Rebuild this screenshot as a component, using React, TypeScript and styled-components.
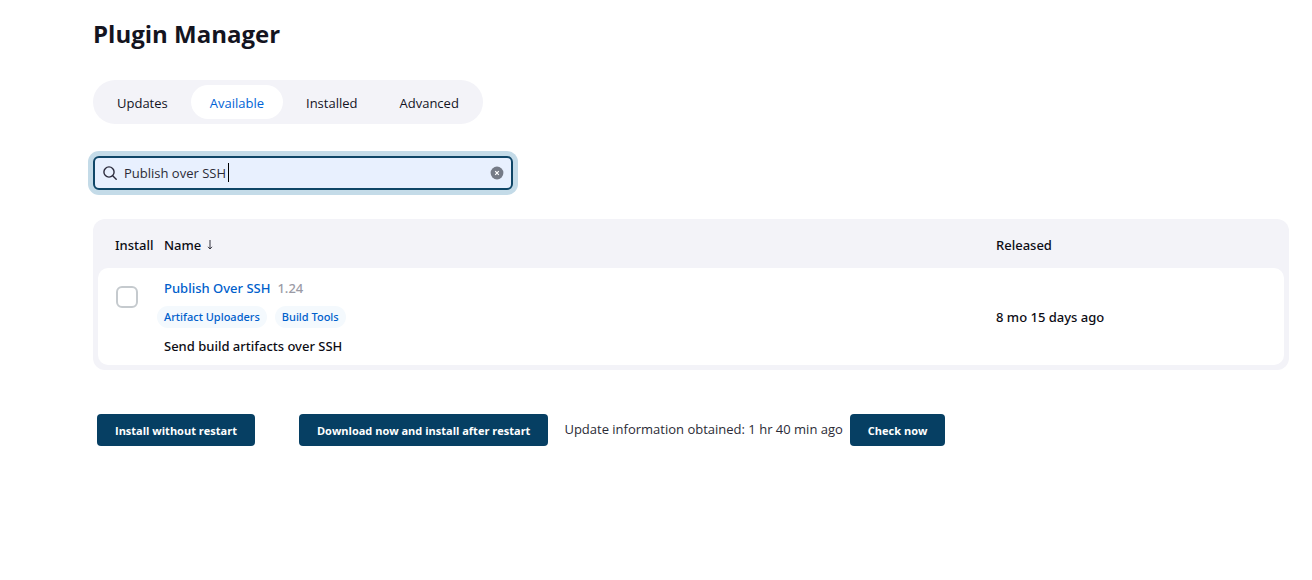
import React, { useState } from "react";
import styled, { createGlobalStyle } from "styled-components";

const GlobalStyle = createGlobalStyle`
  *, *::before, *::after { box-sizing: border-box; }
  body {
    margin: 0;
    background: #fff;
    color: #14141f;
    font-family: "Segoe UI", "Open Sans", "Noto Sans", sans-serif;
    font-size: 13px;
    line-height: 20px;
  }
  button, input { font: inherit; color: inherit; }
  a { text-decoration: none; }
`;

const Page = styled.main`
  padding: 16px 23px 16px 93px;
`;

const Title = styled.h1`
  margin: 0 0 28px;
  font-size: 24px;
  line-height: 36px;
  font-weight: 700;
`;

const TabBar = styled.nav`
  display: flex;
  width: fit-content;
  padding: 5px;
  border-radius: 22px;
  background: #f3f3f8;
`;

const Tab = styled.a<{ $active?: boolean }>`
  padding: 8px 19px 6px;
  border-radius: 17px;
  font-weight: 500;
  color: ${(p) => (p.$active ? "#0063d6" : "#14141f")};
  background: ${(p) => (p.$active ? "#fff" : "transparent")};
  & + & { margin-left: 4px; }
`;

const SearchBox = styled.form`
  position: relative;
  display: flex;
  align-items: center;
  gap: 7px;
  max-width: 420px;
  height: 34px;
  margin: 32px 0 29px;
  padding: 0 7px 0 8px;
  border: 2px solid #0f4667;
  border-radius: 6px;
  background: #e8f0fe;
  box-shadow: 0 0 0 5px #c4dbe8;
`;

const SearchInput = styled.input`
  flex: 1;
  min-width: 0;
  padding: 0;
  border: 0;
  outline: 0;
  background: transparent;
  color: #2b2b36;
  caret-color: transparent;
`;

const Caret = styled.span`
  position: absolute;
  left: 133px;
  top: 5px;
  width: 1px;
  height: 19px;
  background: #000;
`;

const ClearButton = styled.button`
  display: flex;
  padding: 0;
  border: 0;
  background: none;
`;

const PluginTable = styled.table`
  width: 100%;
  padding: 0 5px 5px;
  border-spacing: 0;
  border-radius: 12px;
  background: #f3f3f8;
  table-layout: fixed;
  font-family: "Segoe UI", "Noto Sans", "Open Sans", sans-serif;
  font-weight: 500;
  color: #0c0c14;
`;

const HeadCell = styled.th<{ $width?: string }>`
  width: ${(p) => p.$width ?? "auto"};
  height: 49px;
  padding: 3px 0 0;
  text-align: left;
  font-weight: 500;
  white-space: nowrap;
  &:first-child { padding-left: 17px; }
`;

const SortArrow = styled.span`
  display: inline-block;
  margin-left: 6px;
  svg { display: block; }
`;

const Cell = styled.td`
  height: 97px;
  padding: 0;
  background: #fff;
  &:first-child {
    padding: 18px 0 0 18px;
    vertical-align: top;
    border-radius: 10px 0 0 10px;
  }
  &:last-child { border-radius: 0 10px 10px 0; }
`;

const Checkbox = styled.input`
  appearance: none;
  display: block;
  width: 22px;
  height: 22px;
  margin: 0;
  border: 2px solid #c5cace;
  border-radius: 6px;
  background: #fff;
  &:checked { background: #0063d6; }
`;

const PluginLink = styled.a`
  color: #0060cc;
`;

const Version = styled.span`
  margin-left: 7px;
  color: #9b9ba6;
`;

const Tags = styled.div`
  display: flex;
  gap: 8px;
  margin: 8px 0 8px -7px;
`;

const Tag = styled.a`
  padding: 0 7px;
  border-radius: 11px;
  background: #f4f9fd;
  color: #0060cc;
  font-size: 11px;
  line-height: 22px;
`;

const Actions = styled.div`
  display: flex;
  flex-wrap: wrap;
  align-items: center;
  margin: 44px 0 0 4px;
`;

const ActionButton = styled.button`
  height: 32px;
  padding: 1px 18px 0;
  border: 0;
  border-radius: 4px;
  background: #063f63;
  color: #fff;
  font-size: 11px;
  font-weight: 700;
  & + & { margin-left: 44px; }
`;

const UpdateInfo = styled.span`
  margin: 0 7px 0 16px;
  padding-bottom: 2px;
  color: #2b2b36;
`;

export default function App() {
  const [query, setQuery] = useState("Publish over SSH");
  return (
    <>
      <GlobalStyle />
      <Page>
        <Title>Plugin Manager</Title>
        <TabBar>
          <Tab href="#updates">Updates</Tab>
          <Tab href="#available" $active aria-current="page">Available</Tab>
          <Tab href="#installed">Installed</Tab>
          <Tab href="#advanced">Advanced</Tab>
        </TabBar>
        <SearchBox role="search">
          <svg width="14" height="14" viewBox="0 0 14 14" fill="none" stroke="#2b2b3c" strokeWidth="1.4" strokeLinecap="round" aria-hidden="true">
            <circle cx="6" cy="6" r="5.1" />
            <path d="M9.7 9.7 13.2 13.2" />
          </svg>
          <SearchInput aria-label="Search plugins" value={query} onChange={(e) => setQuery(e.target.value)} />
          {query === "Publish over SSH" && <Caret />}
          <ClearButton type="button" aria-label="Clear search" onClick={() => setQuery("")}>
            <svg width="14" height="14" viewBox="0 0 14 14" aria-hidden="true">
              <circle cx="7" cy="7" r="6.4" fill="#757b87" />
              <path d="M5.2 5.2 8.8 8.8M8.8 5.2 5.2 8.8" stroke="#fff" strokeWidth="1.2" />
            </svg>
          </ClearButton>
        </SearchBox>
        <PluginTable>
          <thead>
            <tr>
              <HeadCell $width="66px">Install</HeadCell>
              <HeadCell>
                Name
                <SortArrow>
                  <svg width="6" height="10" viewBox="0 0 6 10" fill="none" stroke="#33333f" aria-hidden="true">
                    <path d="M3 0V9M1 6.8 3 9 5 6.8" />
                  </svg>
                </SortArrow>
              </HeadCell>
              <HeadCell $width="288px">Released</HeadCell>
            </tr>
          </thead>
          <tbody>
            <tr>
              <Cell><Checkbox type="checkbox" aria-label="Install Publish Over SSH" /></Cell>
              <Cell>
                <PluginLink href="#publish-over-ssh">Publish Over SSH</PluginLink>
                <Version>1.24</Version>
                <Tags>
                  <Tag href="#artifact-uploaders">Artifact Uploaders</Tag>
                  <Tag href="#build-tools">Build Tools</Tag>
                </Tags>
                <div>Send build artifacts over SSH</div>
              </Cell>
              <Cell>8 mo 15 days ago</Cell>
            </tr>
          </tbody>
        </PluginTable>
        <Actions>
          <ActionButton type="button">Install without restart</ActionButton>
          <ActionButton type="button">Download now and install after restart</ActionButton>
          <UpdateInfo>Update information obtained: 1 hr 40 min ago</UpdateInfo>
          <ActionButton type="button">Check now</ActionButton>
        </Actions>
      </Page>
    </>
  );
}
